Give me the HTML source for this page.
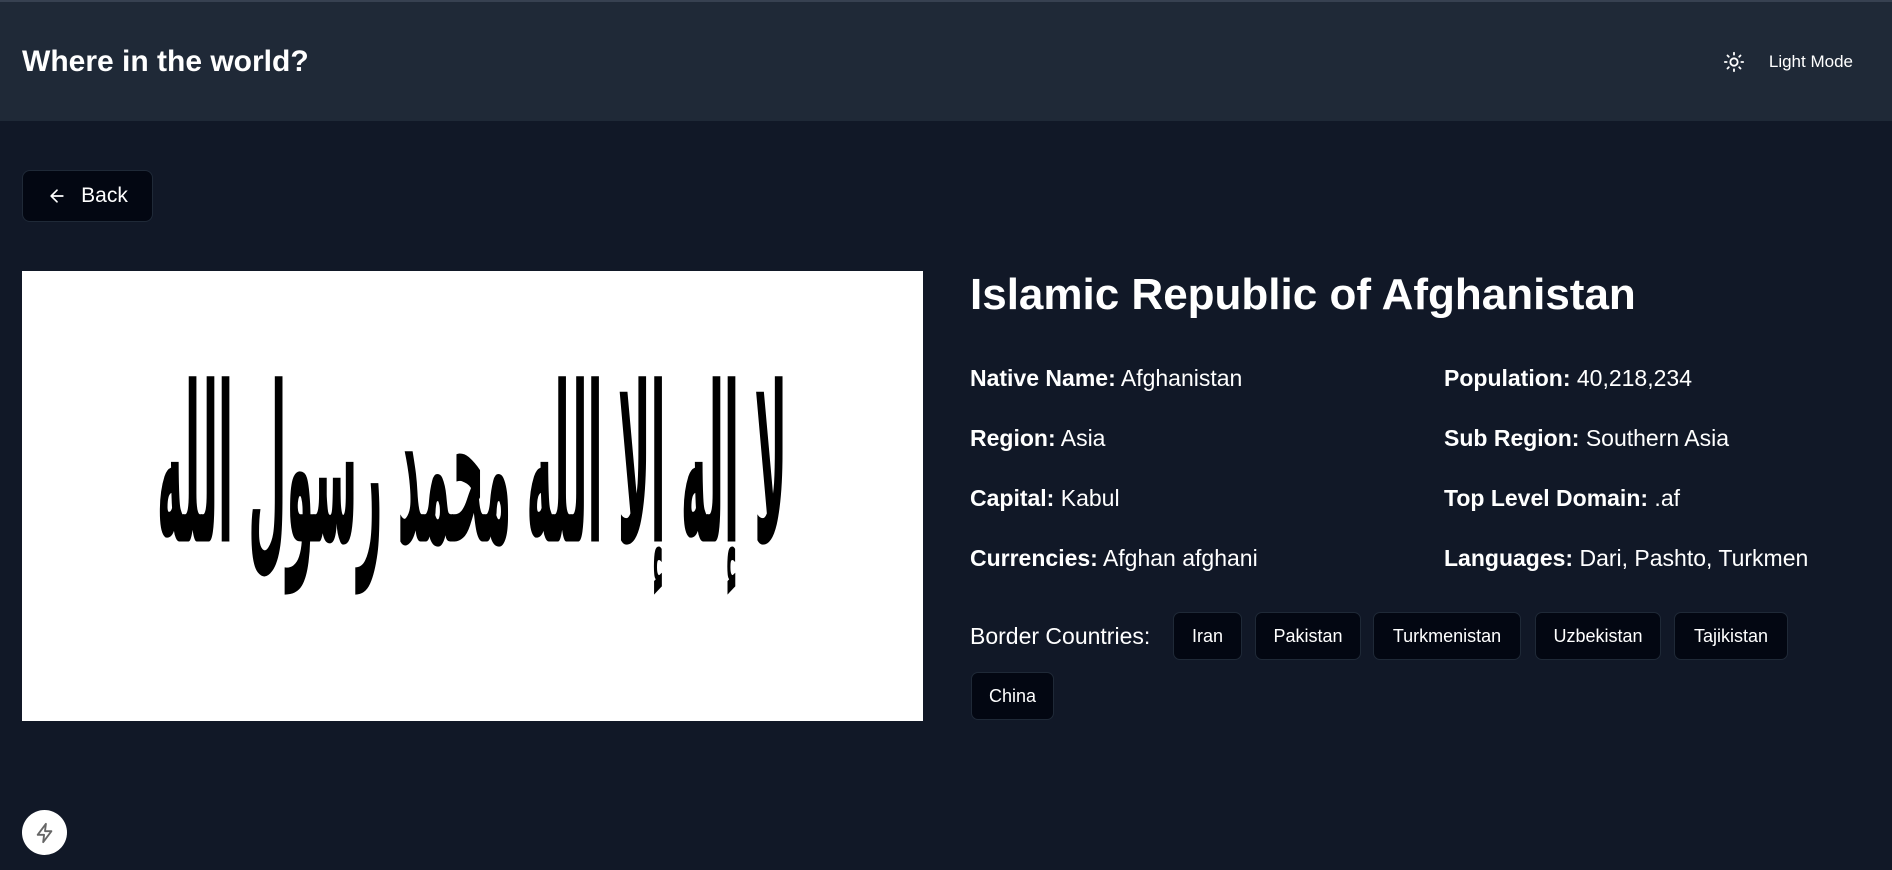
<!DOCTYPE html>
<html><head><meta charset="utf-8"><style>
*{box-sizing:border-box;margin:0;padding:0}
body{width:1892px;height:870px;overflow:hidden;background:#111827;color:#fff;font-family:"Liberation Sans",sans-serif}
header{height:121px;background:#1f2937;border-top:2px solid #374151;display:flex;align-items:center;justify-content:space-between;padding:0 22px}
header h1{font-size:30px;font-weight:700}
.mode{display:flex;align-items:center;gap:24px;font-size:17px;margin-right:17px}
.back{position:absolute;left:22px;top:170px;width:131px;height:52px;background:#030712;border:1px solid #1f2937;border-radius:8px;display:flex;align-items:center;justify-content:center;gap:14px;font-size:21px}
.flag{position:absolute;left:22px;top:271px;width:901px;height:450px;background:#fff;overflow:hidden}
h2{position:absolute;left:970px;top:270px;font-size:44px;font-weight:700}
.f{position:absolute;font-size:23px;white-space:nowrap}
.f b{font-weight:700}
.chip{position:absolute;height:48px;top:612px;background:#030712;border:1px solid #1f2937;border-radius:7px;font-size:18px;display:flex;align-items:center;justify-content:center}
.bolt{position:absolute;left:22px;top:810px;width:45px;height:45px;border-radius:50%;background:#fff;display:flex;align-items:center;justify-content:center}
</style></head><body>
<header><h1>Where in the world?</h1>
<div class="mode"><svg width="22" height="22" viewBox="0 0 24 24" fill="none" stroke="#fff" stroke-width="2" stroke-linecap="round"><circle cx="12" cy="12" r="4"/><path d="M12 2v2M12 20v2M4.9 4.9l1.4 1.4M17.7 17.7l1.4 1.4M2 12h2M20 12h2M4.9 19.1l1.4-1.4M17.7 6.3l1.4-1.4"/></svg><span>Light Mode</span></div></header>
<div class="back"><svg width="20" height="20" viewBox="0 0 24 24" fill="none" stroke="#fff" stroke-width="2" stroke-linecap="round" stroke-linejoin="round"><path d="M19 12H5M12 19l-7-7 7-7"/></svg>Back</div>
<div class="flag"><svg width="901" height="450"><g transform="translate(0,-150) scale(1,1.45)"><text x="450" y="290" text-anchor="middle" font-family="DejaVu Sans,sans-serif" font-weight="700" font-size="150" fill="#000" textLength="630" lengthAdjust="spacingAndGlyphs" direction="rtl">لا إله إلا الله محمد رسول الله</text></g></svg></div>
<h2>Islamic Republic of Afghanistan</h2>
<div class="f" style="left:970px;top:365px"><b>Native Name:</b> Afghanistan</div>
<div class="f" style="left:970px;top:425px"><b>Region:</b> Asia</div>
<div class="f" style="left:970px;top:485px"><b>Capital:</b> Kabul</div>
<div class="f" style="left:970px;top:545px"><b>Currencies:</b> Afghan afghani</div>
<div class="f" style="left:1444px;top:365px"><b>Population:</b> 40,218,234</div>
<div class="f" style="left:1444px;top:425px"><b>Sub Region:</b> Southern Asia</div>
<div class="f" style="left:1444px;top:485px"><b>Top Level Domain:</b> .af</div>
<div class="f" style="left:1444px;top:545px"><b>Languages:</b> Dari, Pashto, Turkmen</div>
<div class="f" style="left:970px;top:623px">Border Countries:</div>
<div class="chip" style="left:1173px;width:69px">Iran</div>
<div class="chip" style="left:1255px;width:106px">Pakistan</div>
<div class="chip" style="left:1373px;width:148px">Turkmenistan</div>
<div class="chip" style="left:1535px;width:126px">Uzbekistan</div>
<div class="chip" style="left:1674px;width:114px">Tajikistan</div>
<div class="chip" style="left:971px;top:672px;width:83px">China</div>
<div class="bolt"><svg width="22" height="22" viewBox="0 0 24 24" fill="none" stroke="#666" stroke-width="2" stroke-linejoin="round"><path d="M13 2L4 14h7l-1 8 9-12h-7z"/></svg></div>
</body></html>
